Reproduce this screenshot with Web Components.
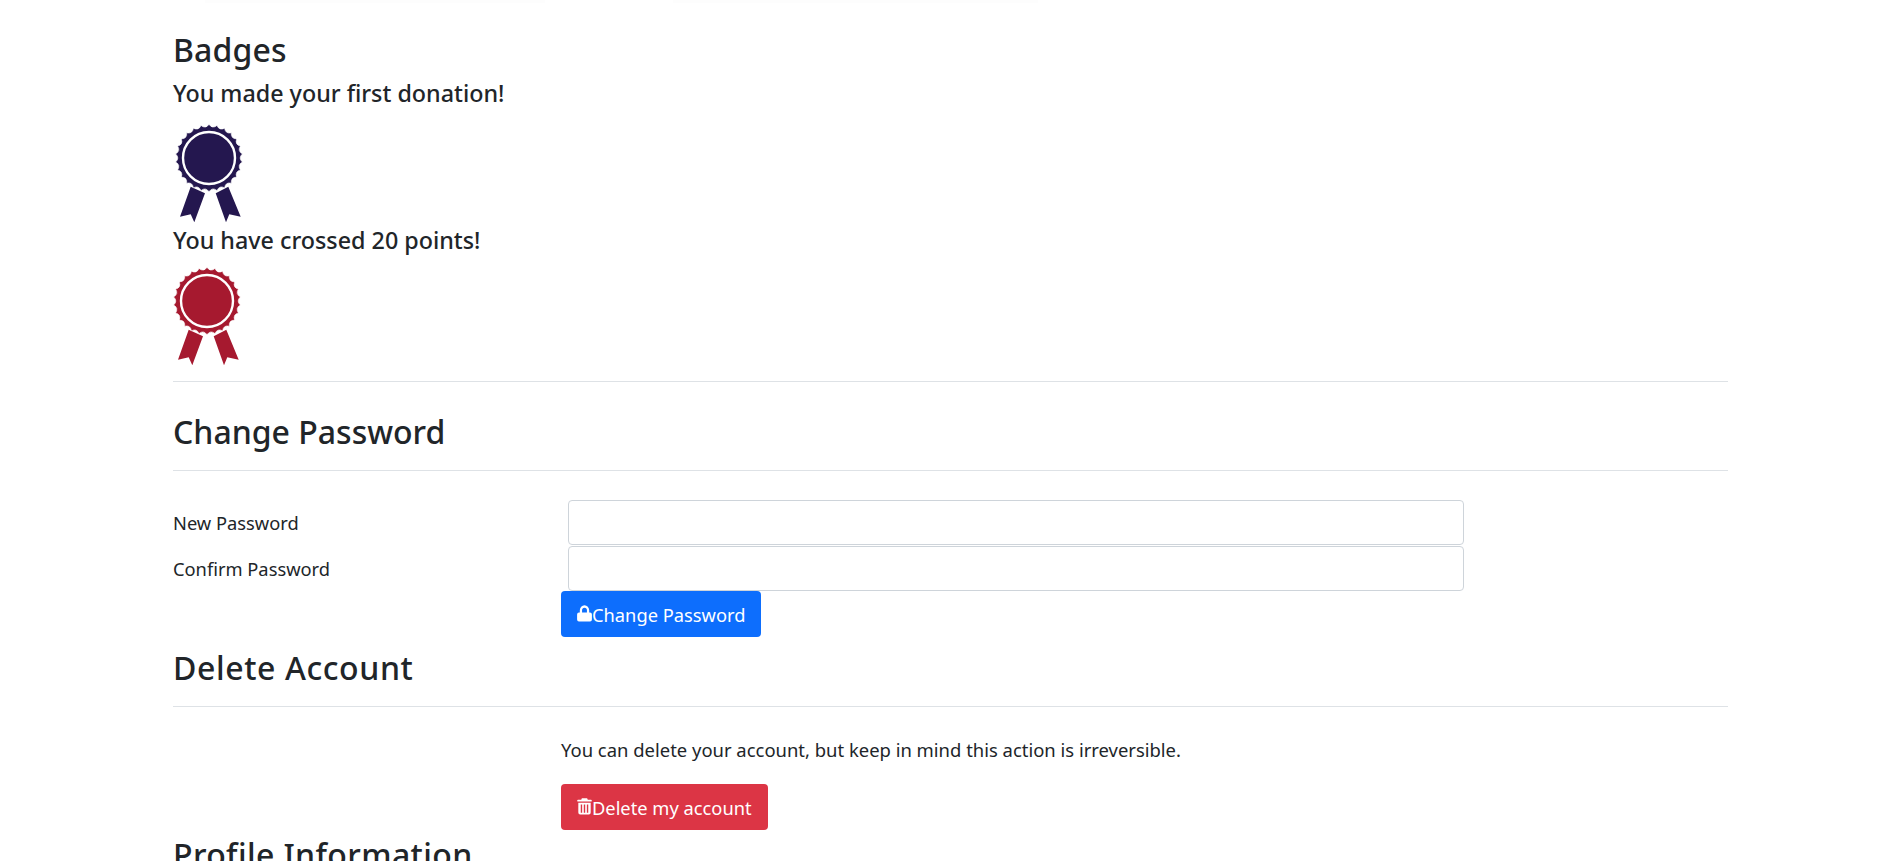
<!DOCTYPE html>
<html>
<head>
<meta charset="utf-8">
<title>Profile</title>
<style>
    html, body { margin: 0; padding: 0; background: #fff; overflow: hidden; height: 861px; }
    body { font-family: "Noto Sans", "Open Sans", sans-serif; color: #212529; font-size: 18.5px; }
</style>
</head>
<body>

<top-shade></top-shade>
<profile-page>
    <section-title track="0.15">Badges</section-title>
    <award-badge color="#24174f" gap="17" shift="2">You made your first donation!</award-badge>
    <award-badge color="#a6192f" gap="13" shift="-0.5">You have crossed 20 points!</award-badge>
    <section-rule></section-rule>

    <section-title ruled>Change Password</section-title>
    <password-form></password-form>

    <section-title ruled track="0.6">Delete Account</section-title>
    <delete-account></delete-account>

    <section-title track="0.38">Profile Information</section-title>
</profile-page>

<script>
class TopShade extends HTMLElement {
    constructor() {
        super();
        this.shadow = this.attachShadow({ mode: 'open' });
    }
    connectedCallback() {
        this.shadow.innerHTML = `
        <style>
            :host { display: block; height: 3px; background: linear-gradient(to right, #fff 205px, #fdfdfd 205px, #fdfdfd 545px, #fff 545px, #fff 673px, #fdfdfd 673px, #fdfdfd 1038px, #fff 1038px); }
        </style>
        `;
    }
}

class ProfilePage extends HTMLElement {
    constructor() {
        super();
        this.shadow = this.attachShadow({ mode: 'open' });
    }
    connectedCallback() {
        this.shadow.innerHTML = `
        <style>
            :host { display: block; padding: 28px 169px 0 173px; }
        </style>
        <slot></slot>
        `;
    }
}

class SectionTitle extends HTMLElement {
    constructor() {
        super();
        this.shadow = this.attachShadow({ mode: 'open' });
    }
    connectedCallback() {
        const track = this.getAttribute('track') || 0;
        this.shadow.innerHTML = `
        <style>
            :host { display: block; }
            h3 { margin: 0 0 10px; font-size: 32px; font-weight: 500; line-height: 38px; letter-spacing: ${track}px; }
            :host([ruled]) h3 { padding-bottom: 19px; border-bottom: 1px solid #dee2e6; margin-bottom: 29px; }
        </style>
        <h3><slot></slot></h3>
        `;
    }
}

class SectionRule extends HTMLElement {
    constructor() {
        super();
        this.shadow = this.attachShadow({ mode: 'open' });
    }
    connectedCallback() {
        this.shadow.innerHTML = `
        <style>
            :host { display: block; height: 1px; background: #dee2e6; margin: 15px 0 31px; }
        </style>
        `;
    }
}

class AwardBadge extends HTMLElement {
    constructor() {
        super();
        this.shadow = this.attachShadow({ mode: 'open' });
    }
    // scalloped rim of the rosette
    rim() {
        let d = '';
        const n = 26;
        const p = (r, a) => (34 + r * Math.sin(a)).toFixed(2) + ' ' + (34 - r * Math.cos(a)).toFixed(2);
        for (let i = 0; i < n; i++) {
            const a0 = (i / n) * Math.PI * 2;
            const a1 = ((i + 0.5) / n) * Math.PI * 2;
            const a2 = ((i + 1) / n) * Math.PI * 2;
            if (i === 0) d += 'M' + p(33.6, a0);
            d += 'Q' + p(29, a1) + ' ' + p(33.6, a2);
        }
        return d + 'Z';
    }
    connectedCallback() {
        const color = this.getAttribute('color');
        const shift = this.getAttribute('shift') || 0;
        const gap = this.getAttribute('gap') || 0;
        this.shadow.innerHTML = `
        <style>
            :host { display: block; margin-bottom: 3px; }
            h5 { margin: 0; font-size: 23.3px; font-weight: 500; line-height: 28px; }
            svg { display: block; margin: ${gap}px 0 0 ${shift}px; }
        </style>
        <h5><slot></slot></h5>
        <svg width="69" height="99" viewBox="0 0 69 99">
            <path fill="${color}" d="M15.7 62.7L5 92.7L15.7 90.3L19.3 98.3L30 69.3Z"/>
            <path fill="${color}" d="M40.7 69.3L51 98.3L54.3 90.3L65.7 92.7L53.3 62.7Z"/>
            <path fill="${color}" stroke="#fff" stroke-width="0.6" d="${this.rim()}"/>
            <circle cx="34" cy="34" r="26" fill="${color}" stroke="#fff" stroke-width="2.4"/>
        </svg>
        `;
    }
}

class PasswordForm extends HTMLElement {
    constructor() {
        super();
        this.shadow = this.attachShadow({ mode: 'open' });
    }
    connectedCallback() {
        this.shadow.innerHTML = `
        <style>
            :host { display: block; margin-bottom: 12px; }
            .row { display: grid; grid-template-columns: 388px 1fr; align-items: start; height: 45.5px; }
            .row span { line-height: 46px; font-size: 18.3px; }
            input { display: block; box-sizing: border-box; margin: 0 0 0 7px; width: 896px; height: 45px; border: 1px solid #ced4da; border-radius: 4px; background: #fff; padding: 6px 12px; }
            .actions { padding-left: 388px; height: 46px; }
        </style>
        <div class="row"><span>New Password</span><input type="password"></div>
        <div class="row"><span>Confirm Password</span><input type="password"></div>
        <div class="actions"><ui-button color="#0d6efd" icon="lock">Change Password</ui-button></div>
        `;
    }
}

class DeleteAccount extends HTMLElement {
    constructor() {
        super();
        this.shadow = this.attachShadow({ mode: 'open' });
    }
    connectedCallback() {
        this.shadow.innerHTML = `
        <style>
            :host { display: block; padding-left: 388px; margin-bottom: 6px; }
            p { margin: 0 0 20px; line-height: 28px; font-size: 18.45px; }
        </style>
        <p>You can delete your account, but keep in mind this action is irreversible.</p>
        <ui-button color="#dc3545" icon="trash">Delete my account</ui-button>
        `;
    }
}

class UiButton extends HTMLElement {
    constructor() {
        super();
        this.shadow = this.attachShadow({ mode: 'open' });
    }
    connectedCallback() {
        const icons = {
            lock: '<path d="M8 .2a5 5 0 0 0-5 5v2h-.9A2 2 0 0 0 .1 9.2v4.8a2 2 0 0 0 2 2h11.8a2 2 0 0 0 2-2V9.2a2 2 0 0 0-2-2H13v-2A5 5 0 0 0 8 .2zm0 2.4a2.6 2.6 0 0 1 2.6 2.6v2H5.4v-2A2.6 2.6 0 0 1 8 2.6z" fill-rule="evenodd"/>',
            trash: '<path d="M5.2 .2h5.6l.7 1.5h3.4a.9.9 0 0 1 0 1.8H1.1a.9.9 0 0 1 0-1.8h3.4zM1.4 4.6h13.2v9.4a2 2 0 0 1-2 2H3.4a2 2 0 0 1-2-2zm2.6 1.7v8h1.5v-8zm3.25 0v8h1.5v-8zm3.25 0v8h1.5v-8z" fill-rule="evenodd"/>'
        };
        this.shadow.innerHTML = `
        <style>
            :host { display: inline-block; vertical-align: top; }
            button { display: flex; align-items: center; height: 46px; box-sizing: border-box; padding: 0 16px; border: 0; border-radius: 4px; color: #fff; background: ${this.getAttribute('color')}; font: inherit; font-size: 18.3px; }
            svg { width: 15px; height: 16.5px; margin-bottom: 1px; fill: #fff; flex: none; }
        </style>
        <button><svg viewBox="0 0 16 16" preserveAspectRatio="none">${icons[this.getAttribute('icon')]}</svg><slot></slot></button>
        `;
    }
}

customElements.define('top-shade', TopShade);
customElements.define('profile-page', ProfilePage);
customElements.define('section-title', SectionTitle);
customElements.define('section-rule', SectionRule);
customElements.define('award-badge', AwardBadge);
customElements.define('password-form', PasswordForm);
customElements.define('delete-account', DeleteAccount);
customElements.define('ui-button', UiButton);
</script>
</body>
</html>
